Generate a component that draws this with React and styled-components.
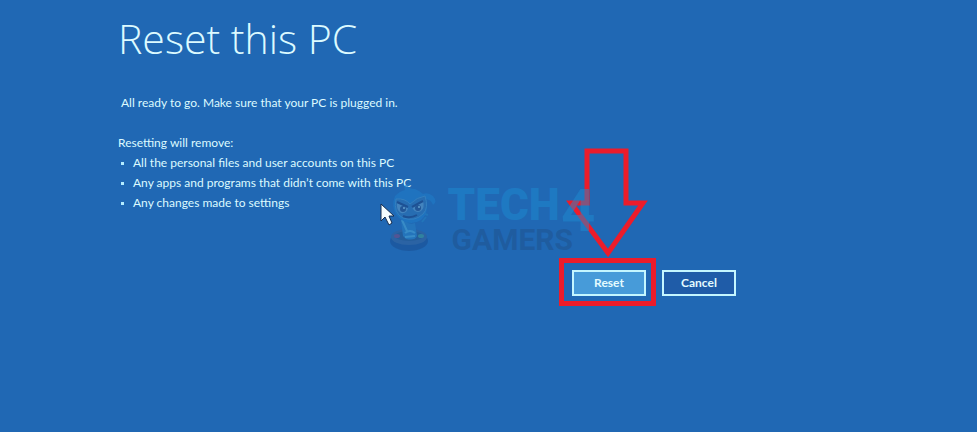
import React from "react";
import styled, {createGlobalStyle} from "styled-components";

const GlobalStyle = createGlobalStyle`
  * {
    box-sizing: border-box;
  }

  body {
    margin: 0;
    background-color: #2068b4;
    color: #dcfaff;
    font-family: Lato, "Noto Sans", sans-serif;
    font-size: 12px;
    line-height: 20px;
  }
`;

const Screen = styled.div`
  position: relative;
  min-height: 100vh;
  overflow: hidden;
`;

const Content = styled.main`
  max-width: 736px;
  padding: 8px 0 24px 118px;
`;

const Title = styled.h1`
  margin: 0;
  font-family: "Open Sans", "Noto Sans", sans-serif;
  font-size: 41px;
  line-height: 60px;
  font-weight: 300;
`;

const Intro = styled.p`
  margin: 25px 0 20px;
  padding-left: 3px;
`;

const ListHeading = styled.p`
  margin: 0;
`;

const List = styled.ul`
  margin: 0;
  padding: 0;
  list-style: none;
`;

const Item = styled.li`
  display: flex;
  align-items: center;
  gap: 9px;
  padding-left: 3px;

  &::before {
    content: "";
    width: 3px;
    height: 3px;
    background-color: #b4ecff;
  }
`;

const Actions = styled.div`
  display: flex;
  justify-content: flex-end;
  gap: 16px;
  margin-top: 57px;
`;

const ButtonSlot = styled.div`
  position: relative;
`;

const Button = styled.button`
  display: block;
  width: 74px;
  height: 26px;
  padding: 0;
  border: 2px solid #c4f6ff;
  background-color: ${props => (props.$primary ? "#479bd9" : "#1f5ca8")};
  color: #e4fbff;
  font-family: inherit;
  font-size: 12px;
  line-height: 20px;
  font-weight: 700;
  cursor: pointer;
`;

const Highlight = styled.div`
  position: absolute;
  inset: -12px -10px -10px -13px;
  border: 5px solid #ec1c2b;
  pointer-events: none;
`;

const Arrow = styled.svg`
  position: absolute;
  left: -7px;
  bottom: 38px;
  width: 84px;
  height: 112px;
  pointer-events: none;
`;

const Pointer = styled.svg`
  position: absolute;
  left: 380px;
  top: 203px;
  width: 15px;
  height: 24px;
  pointer-events: none;
`;

const Watermark = styled.div`
  position: absolute;
  inset: 0;
  display: flex;
  align-items: center;
  justify-content: center;
  gap: 12px;
  padding: 4px 0 0 8px;
  pointer-events: none;
`;

const Mascot = styled.svg`
  width: 46px;
  height: 70px;
  opacity: 0.7;
`;

const Brand = styled.div`
  display: grid;
  grid-template-columns: auto auto;
  padding-top: 8px;
  font-family: Roboto, "Liberation Sans", sans-serif;
`;

const BrandTop = styled.span`
  color: rgba(29, 138, 208, 0.5);
  font-size: 44px;
  line-height: 36px;
  font-weight: 900;
`;

const BrandFour = styled.span`
  grid-row: span 2;
  margin-left: -12px;
  color: rgba(29, 138, 208, 0.5);
  font-size: 60px;
  line-height: 48px;
  font-weight: 700;
`;

const BrandBottom = styled.span`
  padding-left: 4px;
  color: rgba(31, 84, 146, 0.6);
  font-size: 30px;
  line-height: 34px;
  font-weight: 700;
`;

function WatermarkLogo() {
  return (
    <Watermark>
      <Mascot viewBox="0 0 46 70" aria-hidden="true">
        <ellipse cx="19" cy="58" rx="19" ry="10" fill="#1b5195" opacity="0.85"/>
        <ellipse cx="19" cy="54" rx="18" ry="8" fill="#31629e"/>
        <ellipse cx="19" cy="53" rx="14" ry="5" fill="#265991"/>
        <ellipse cx="7" cy="53" rx="3" ry="2" fill="#684d88"/>
        <ellipse cx="31" cy="53" rx="3" ry="2" fill="#388e98"/>
        <path
          d="M11 37L14 35Q18 43 25 40L27 53Q25 58 16 56L13 53Z"
          fill="#267abe"
        />
        <path
          d="M12 37L17 48M15 50Q20 46 25 50M15 54L25 53"
          fill="none"
          stroke="#439bd0"
          strokeWidth="2"
        />
        <path
          d="M5 13Q10 8 15 7Q13 2 18 1Q20 0 18 3Q19 6 25 6Q30 8 33 11Q38 9 43 13Q48 19 43 22Q41 16 35 16Q40 30 31 37Q20 44 9 35Q0 26 5 13Z"
          fill="#1f78c4"
        />
        <path
          d="M6 16Q15 15 20 21Q27 14 35 13Q39 25 33 31Q25 39 13 35Q3 30 6 16Z"
          fill="#2b70b2"
          stroke="#3b8ac5"
        />
        <path
          d="M7 20L18 25Q17 31 11 30Q6 27 7 20ZM22 24L33 18Q35 25 31 28Q25 31 22 24Z"
          fill="#5390c3"
        />
        <path
          d="M7 19L18 24M22 24L33 18M13 33Q20 36 27 32"
          fill="none"
          stroke="#1c4887"
          strokeWidth="2"
        />
        <circle cx="13" cy="26" r="3" fill="#234f8c"/>
        <circle cx="28" cy="25" r="3" fill="#234f8c"/>
        <circle cx="14" cy="25" r="1" fill="#7eb6d7"/>
        <circle cx="29" cy="24" r="1" fill="#7eb6d7"/>
        <path d="M36 34L32 39M35 31L38 32" stroke="#247bbd" strokeWidth="2"/>
      </Mascot>
      <Brand>
        <BrandTop>TECH</BrandTop>
        <BrandFour>4</BrandFour>
        <BrandBottom>GAMERS</BrandBottom>
      </Brand>
    </Watermark>
  );
}

function App() {
  return (
    <Screen>
      <GlobalStyle/>
      <Content>
        <Title>Reset this PC</Title>
        <Intro>All ready to go. Make sure that your PC is plugged in.</Intro>
        <ListHeading>Resetting will remove:</ListHeading>
        <List>
          <Item>All the personal files and user accounts on this PC</Item>
          <Item>Any apps and programs that didn’t come with this PC</Item>
          <Item>Any changes made to settings</Item>
        </List>
        <Actions>
          <ButtonSlot>
            <Button type="button" $primary>Reset</Button>
            <Highlight/>
            <Arrow viewBox="0 0 84 112" aria-hidden="true">
              <path
                d="M22 5H61V57H78L43 107L6 57H22Z"
                fill="none"
                stroke="#ec1c2b"
                strokeWidth="5"
              />
            </Arrow>
          </ButtonSlot>
          <Button type="button">Cancel</Button>
        </Actions>
      </Content>
      <WatermarkLogo/>
      <Pointer viewBox="0 0 15 24" aria-hidden="true">
        <path
          d="M1 1V18L5 14L9 22L12 20L9 13H14Z"
          fill="#f4fdff"
          stroke="#152c4f"
        />
      </Pointer>
    </Screen>
  );
}

export default App;
